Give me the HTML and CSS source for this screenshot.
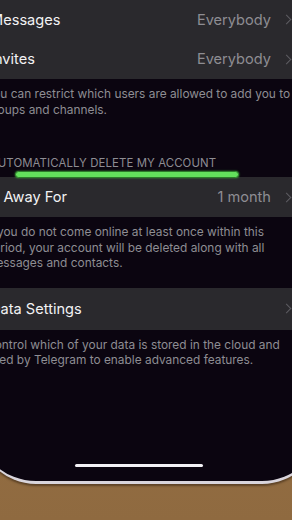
FILE: index.html
```html
<!DOCTYPE html>
<html lang="en">
<head>
    <meta charset="UTF-8">
    <meta name="viewport" content="width=device-width, initial-scale=1.0">
    <title>Privacy and Security</title>
    <link rel="stylesheet" href="styles.css">
</head>
<body>
    <div class="phone">
        <div class="screen">
            <div class="group first">
                <div class="cell">
                    <span class="label">Messages</span>
                    <span class="value">Everybody</span>
                    <span class="chevron"></span>
                </div>
                <div class="cell">
                    <span class="label">Invites</span>
                    <span class="value">Everybody</span>
                    <span class="chevron"></span>
                </div>
            </div>
            <p class="footer">You can restrict which users are allowed to add you to groups and channels.</p>

            <div class="header">
                Automatically delete my account
                <span class="marker"></span>
            </div>
            <div class="group">
                <div class="cell">
                    <span class="label">If Away For</span>
                    <span class="value">1 month</span>
                    <span class="chevron"></span>
                </div>
            </div>
            <p class="footer">If you do not come online at least once within this period, your account will be deleted along with all messages and contacts.</p>

            <div class="group spaced">
                <div class="cell tall">
                    <span class="label">Data Settings</span>
                    <span class="chevron"></span>
                </div>
            </div>
            <p class="footer">Control which of your data is stored in the cloud and used by Telegram to enable advanced features.</p>

            <div class="home-bar"></div>
        </div>
    </div>
</body>
</html>
```

FILE: styles.css
```css
:root{
    --screen:#0b0510;
    --cell:#2a292d;
    --text:#f2f2f4;
    --muted:#8e8d93;
}
*{
    box-sizing: border-box;
}
html,body{
    margin: 0;
    height: 100%;
    overflow: hidden;
}
body{
    background: linear-gradient(#a47a4a, #8f6a40);
    font-family: Inter, "Liberation Sans", sans-serif;
}
/* the photo crops the phone on both sides */
.phone{
    width: 342px;
    margin-left: -22px;
    height: 484px;
    border-bottom: 3px solid #d9d5dc;
    border-radius: 0 0 58px 58px;
    background-color: var(--screen);
    box-shadow: 0 2px 2px rgba(60,40,20,0.6);
}
.screen{
    height: 100%;
    display: flex;
    flex-direction: column;
    position: relative;
    overflow: hidden;
    border-radius: 0 0 56px 56px;
}
.group{
    background-color: var(--cell);
}
.group.spaced{
    margin-top: 17px;
}
.cell{
    display: flex;
    align-items: center;
    height: 40px;
    padding: 0 30px 0 12px;
    font-size: 14.6px;
    color: var(--text);
}
.cell.tall{
    height: 42px;
}
.first .cell:first-child{
    height: 39px;
}
.label{
    flex: 1;
}
.value{
    color: var(--muted);
    margin-right: 12px;
}
.chevron{
    width: 7px;
    height: 7px;
    border-top: 1.6px solid #5d5c62;
    border-right: 1.6px solid #5d5c62;
    transform: rotate(45deg);
}
.footer{
    margin: 0;
    padding: 7px 26px 0 8px;
    font-size: 11.9px;
    line-height: 15.5px;
    color: var(--muted);
}
.header{
    position: relative;
    margin-top: 39px;
    padding: 0 0 7px 12px;
    font-size: 11.4px;
    line-height: 14px;
    letter-spacing: 0.1px;
    text-transform: uppercase;
    color: var(--muted);
}
.marker{
    position: absolute;
    left: 37px;
    top: 15px;
    width: 224px;
    height: 7px;
    border-radius: 4px;
    background-color: #63e05c;
    border: 1px solid #2c7a2a;
    box-shadow: 0 0 2px #3da83a;
}
.home-bar{
    margin: auto auto 14px 97px;
    width: 128px;
    height: 3px;
    border-radius: 2px;
    background-color: #f4f2f6;
}
```
